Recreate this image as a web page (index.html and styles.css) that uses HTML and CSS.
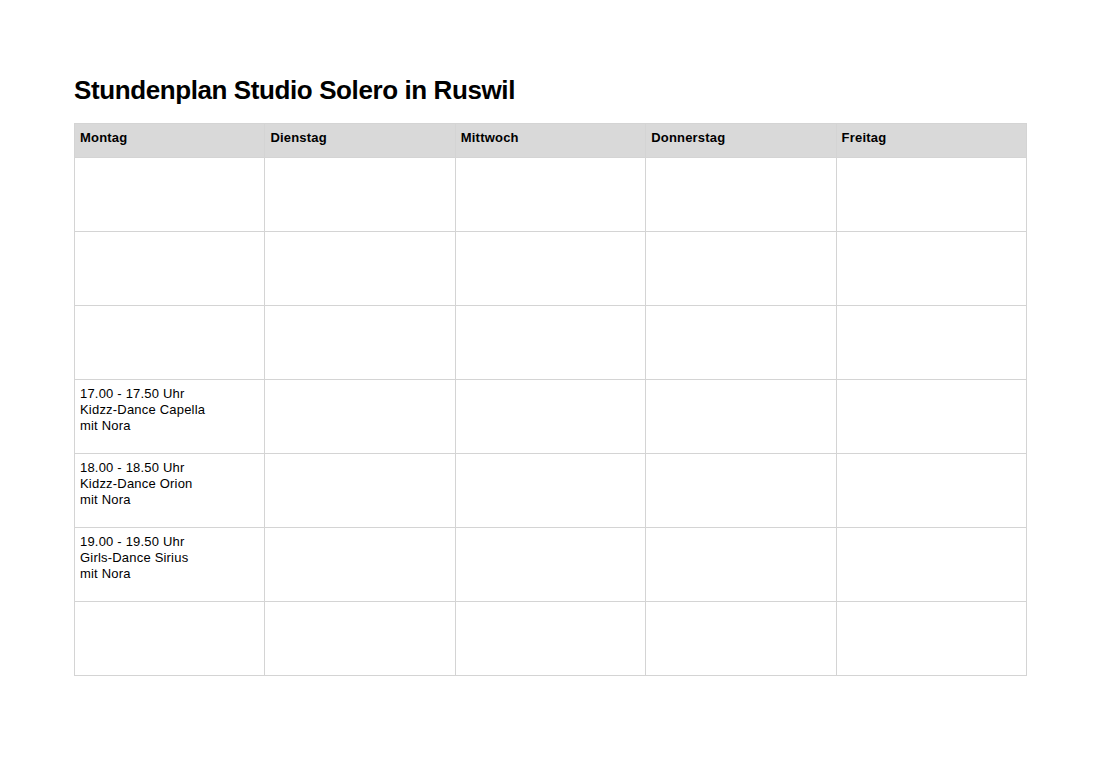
FILE: index.html
```html
<!DOCTYPE html>
<html lang="de">
<head>
<meta charset="utf-8">
<title>Stundenplan Studio Solero in Ruswil</title>
<link rel="stylesheet" href="styles.css">
</head>
<body>
<main class="page">
  <h1 class="title">Stundenplan Studio Solero in Ruswil</h1>
  <table class="plan">
    <thead>
      <tr><th>Montag</th><th>Dienstag</th><th>Mittwoch</th><th>Donnerstag</th><th>Freitag</th></tr>
    </thead>
    <tbody>
      <tr><td></td><td></td><td></td><td></td><td></td></tr>
      <tr><td></td><td></td><td></td><td></td><td></td></tr>
      <tr><td></td><td></td><td></td><td></td><td></td></tr>
      <tr><td>17.00 - 17.50 Uhr<br>Kidzz-Dance Capella<br>mit Nora</td><td></td><td></td><td></td><td></td></tr>
      <tr><td>18.00 - 18.50 Uhr<br>Kidzz-Dance Orion<br>mit Nora</td><td></td><td></td><td></td><td></td></tr>
      <tr><td>19.00 - 19.50 Uhr<br>Girls-Dance Sirius<br>mit Nora</td><td></td><td></td><td></td><td></td></tr>
      <tr><td></td><td></td><td></td><td></td><td></td></tr>
    </tbody>
  </table>
</main>
</body>
</html>
```
FILE: styles.css
```css
html, body {
  margin: 0;
  padding: 0;
  background: #ffffff;
}
body {
  font-family: "Liberation Sans", Arial, sans-serif;
  color: #000;
}
.page {
  padding: 74px 74px 0 74px;
}
.title {
  margin: 0 0 17px 0;
  font-size: 26px;
  line-height: 32px;
  font-weight: bold;
  letter-spacing: -0.4px;
}
.plan {
  width: 953px;
  border-collapse: collapse;
  table-layout: fixed;
}
.plan th, .plan td {
  border: 1px solid #d4d4d4;
  vertical-align: top;
  text-align: left;
  padding: 6px 5px 0 5px;
  font-size: 13px;
  line-height: 16px;
  letter-spacing: 0.2px;
}
.plan th {
  background: #d9d9d9;
  height: 27px;
  font-weight: bold;
  padding-top: 6px;
}
.plan td {
  height: 67px;
}
```
